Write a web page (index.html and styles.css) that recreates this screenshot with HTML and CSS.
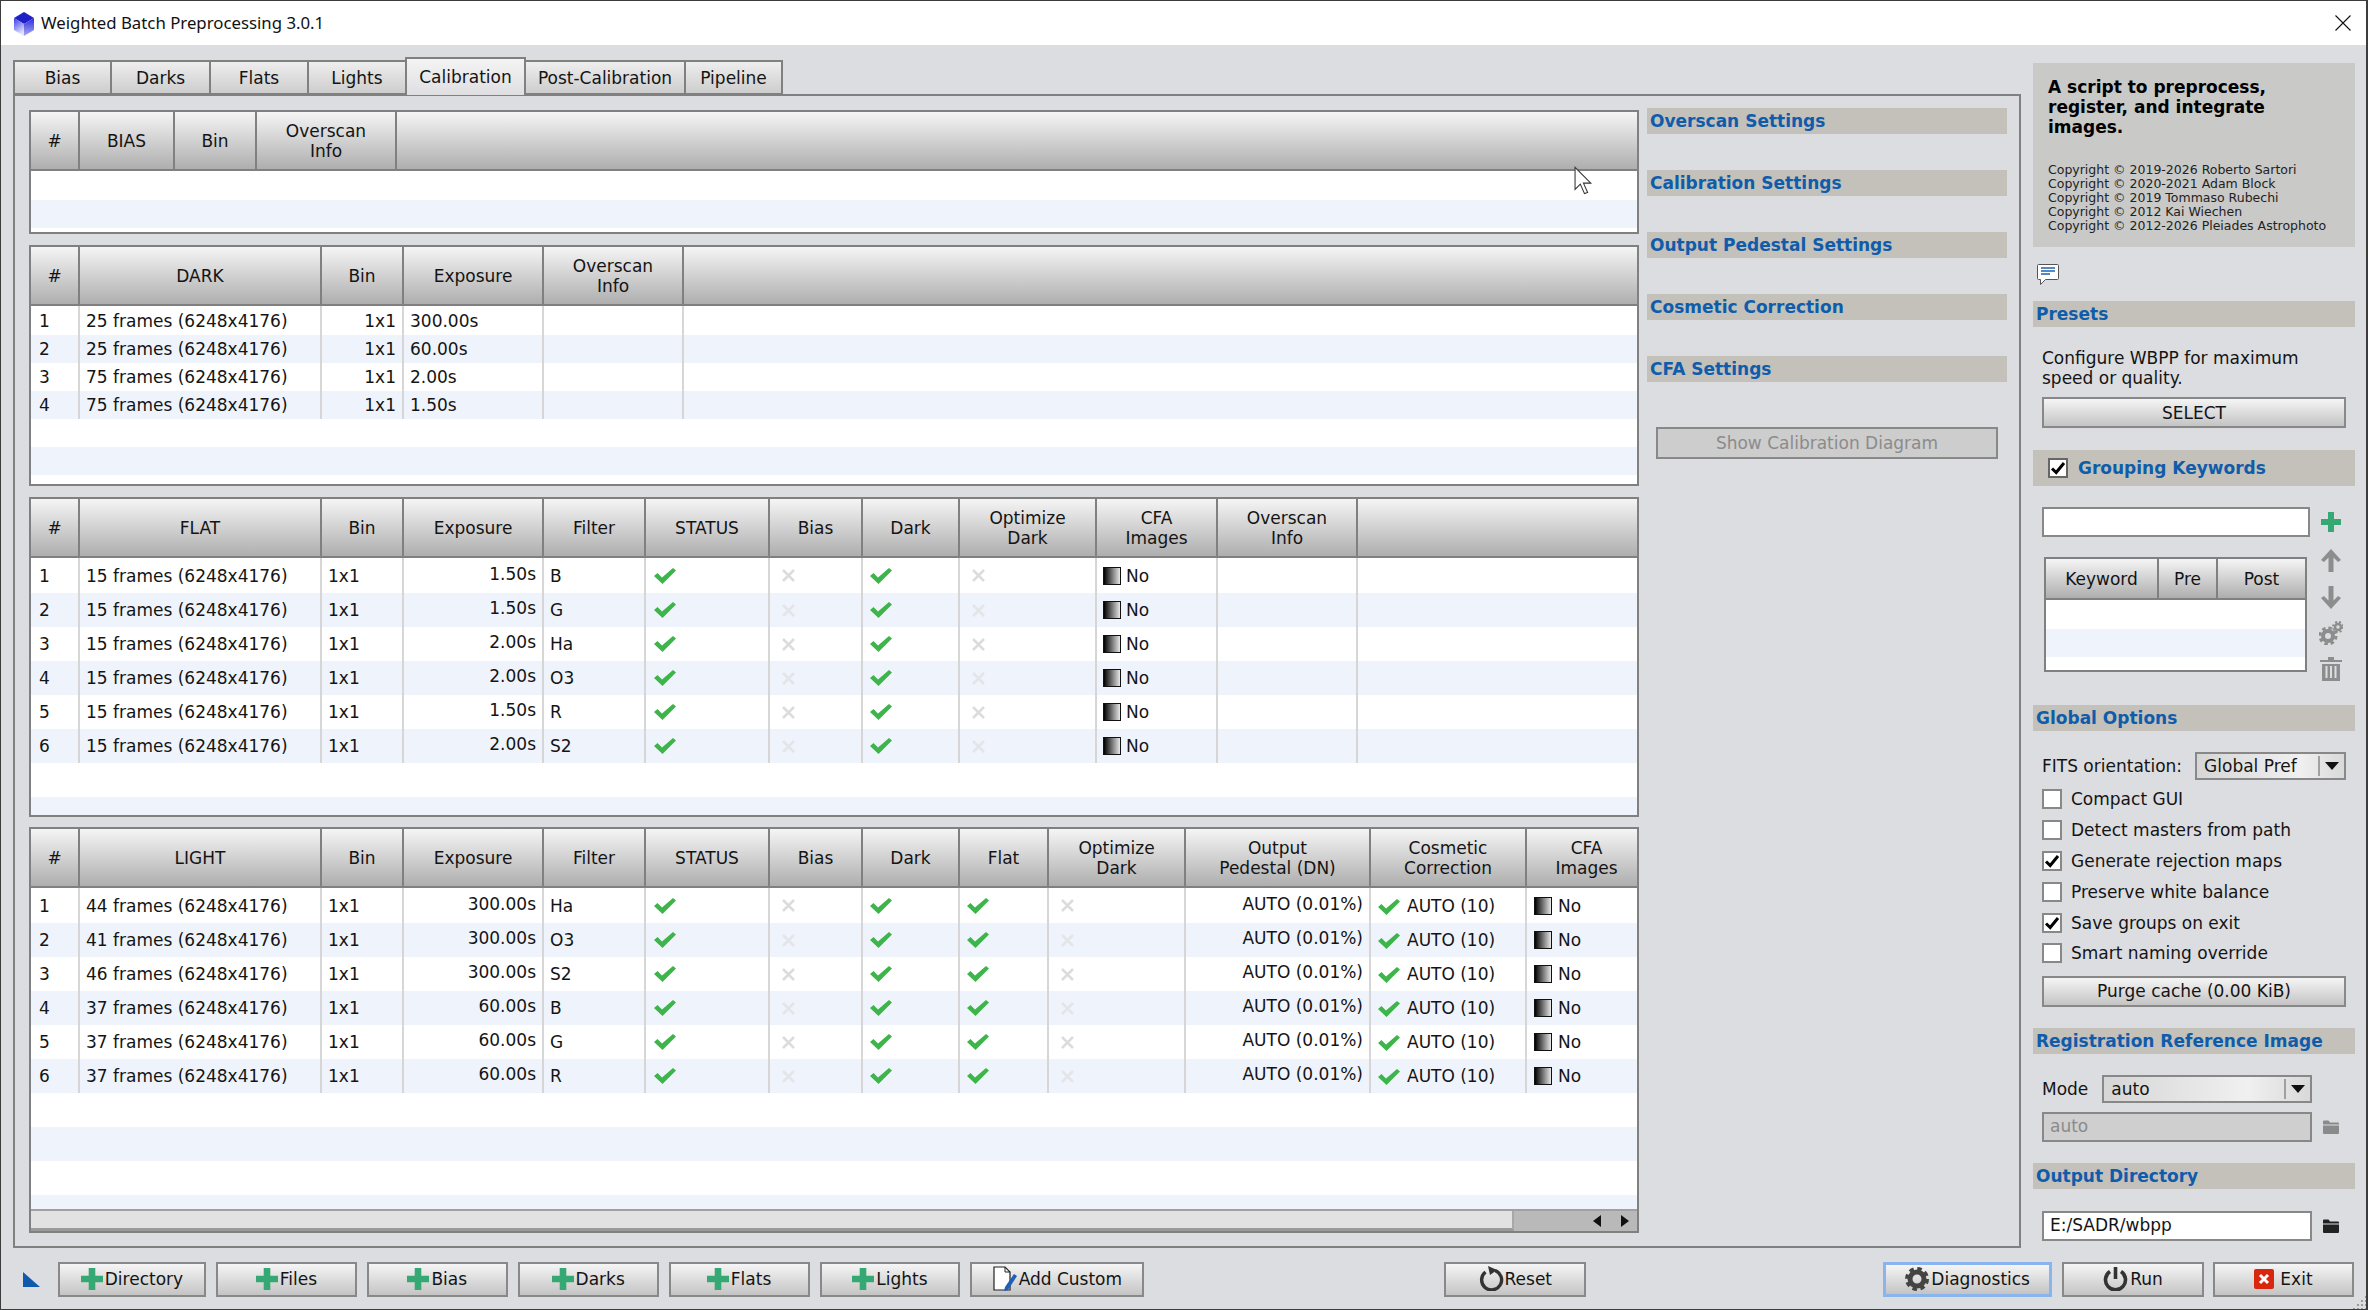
FILE: index.html
```html
<!DOCTYPE html>
<html lang="en">
<head>
    <meta charset="UTF-8">
    <title>Weighted Batch Preprocessing 3.0.1</title>
    <link rel="stylesheet" href="styles.css">
</head>
<body>
    <svg class="defs" xmlns="http://www.w3.org/2000/svg">
        <defs>
            <linearGradient id="gem-left" x1="0" y1="0" x2="0.4" y2="1"><stop offset="0" stop-color="#3a3ae8"/><stop offset="1" stop-color="#e4e4fb"/></linearGradient>
            <linearGradient id="gem-right" x1="0" y1="0" x2="0" y2="1"><stop offset="0" stop-color="#2c2ce0"/><stop offset="1" stop-color="#a9a9f2"/></linearGradient>
            <symbol id="check" viewBox="0 0 22 16"><path d="M0 8 L3.500 5 L8 9.500 L19 0 L22 2.500 L8.500 16 Z" fill="#3db54a"/></symbol>
            <symbol id="cross" viewBox="0 0 13 13"><path d="M1 1 L12 12 M12 1 L1 12" fill="none" stroke="#dcdcdc" stroke-width="2.500"/></symbol>
            <symbol id="plus" viewBox="0 0 20 20"><path d="M7 0h6v7h7v6h-7v7h-6v-7h-7v-6h7z" fill="#35a874"/></symbol>
            <symbol id="up" viewBox="0 0 20 23"><path d="M10 0 L20 11 L17 13 L12.500 8.500 V23 H7.500 V8.500 L3 13 L0 11 Z" fill="#8d8d8d"/></symbol>
            <symbol id="down" viewBox="0 0 20 23"><path d="M10 23 L20 12 L17 10 L12.500 14.500 V0 H7.500 V14.500 L3 10 L0 12 Z" fill="#8d8d8d"/></symbol>
            <symbol id="gear" viewBox="0 0 24 24"><circle cx="12" cy="12" r="7" fill="none" stroke="currentColor" stroke-width="5"/><circle cx="12" cy="12" r="10" fill="none" stroke="currentColor" stroke-width="4" stroke-dasharray="4.400 3.450"/></symbol>
            <symbol id="cogs" viewBox="0 0 24 24"><circle cx="9" cy="15" r="5" fill="none" stroke="#8d8d8d" stroke-width="4"/><circle cx="9" cy="15" r="8" fill="none" stroke="#8d8d8d" stroke-width="3" stroke-dasharray="3.500 2.800"/><circle cx="19" cy="6" r="3" fill="none" stroke="#8d8d8d" stroke-width="2.500"/><circle cx="19" cy="6" r="5" fill="none" stroke="#8d8d8d" stroke-width="2" stroke-dasharray="2 2"/></symbol>
            <symbol id="trash" viewBox="0 0 22 24"><path d="M0 3h8v-3h6v3h8v2h-22z M2 7h18v17h-18z M5.500 9v12h2v-12z M10 9v12h2v-12z M14.500 9v12h2v-12z" fill="#8d8d8d" fill-rule="evenodd"/></symbol>
            <symbol id="folder" viewBox="0 0 16 16"><path d="M0 2.500q0-1 1-1h4.500l1.500 2h8q1 0 1 1v1h-16z M0 6.500h16v7.500q0 1-1 1h-14q-1 0-1-1z" fill="currentColor"/></symbol>
            <symbol id="combo-arrow" viewBox="0 0 14 8"><path d="M0 0h14l-7 8z" fill="#111"/></symbol>
            <symbol id="tick" viewBox="0 0 16 16"><path d="M2 8.500 L6.200 12.500 L14 3" fill="none" stroke="#000" stroke-width="3"/></symbol>
        </defs>
    </svg>

    <div class="window">
        <header class="titlebar">
            <svg class="app-icon" viewBox="0 0 20 24">
                <path d="M10 0 L20 6 L10 12 L0 6 Z" fill="#2020c8"/>
                <path d="M0 6 L10 12 V24 L0 18 Z" fill="url(#gem-left)"/>
                <path d="M20 6 L10 12 V24 L20 18 Z" fill="url(#gem-right)"/>
            </svg>
            <span class="title-text">Weighted Batch Preprocessing 3.0.1</span>
            <svg class="close-icon" viewBox="0 0 16 16"><path d="M0.500 0.500 L15.500 15.500 M15.500 0.500 L0.500 15.500" stroke="#111" stroke-width="1.100" fill="none"/></svg>
        </header>

        <div class="workspace">
            <div class="upper">
                <div class="left">
                    <nav class="tabs">
                        <div class="tab tab-bias">Bias</div>
                        <div class="tab tab-darks">Darks</div>
                        <div class="tab">Flats</div>
                        <div class="tab">Lights</div>
                        <div class="tab tab-active">Calibration</div>
                        <div class="tab tab-post">Post-Calibration</div>
                        <div class="tab tab-last">Pipeline</div>
                    </nav>

                    <div class="panel">
                        <div class="tables">
                            <div class="tbl tbl-bias">
                                <table class="grid">
                                    <thead><tr><th class="w49">#</th><th class="w95">BIAS</th><th class="w82">Bin</th><th class="w140">Overscan<br>Info</th><th class="end"></th></tr></thead>
                                </table>
                                <div class="blank first-short"></div>
                                <div class="blank short alt"></div>
                            </div>

                            <div class="tbl tbl-dark">
                                <table class="grid rows-short">
                                    <thead><tr><th class="w49">#</th><th class="w242">DARK</th><th class="w82">Bin</th><th class="w140">Exposure</th><th class="w140">Overscan<br>Info</th><th class="end"></th></tr></thead>
                                    <tbody>
                                        <tr><td class="idx">1</td><td>25 frames (6248x4176)</td><td class="right">1x1</td><td>300.00s</td><td></td><td class="end"></td></tr>
                                        <tr class="alt"><td class="idx">2</td><td>25 frames (6248x4176)</td><td class="right">1x1</td><td>60.00s</td><td></td><td class="end"></td></tr>
                                        <tr><td class="idx">3</td><td>75 frames (6248x4176)</td><td class="right">1x1</td><td>2.00s</td><td></td><td class="end"></td></tr>
                                        <tr class="alt"><td class="idx">4</td><td>75 frames (6248x4176)</td><td class="right">1x1</td><td>1.50s</td><td></td><td class="end"></td></tr>
                                    </tbody>
                                </table>
                                <div class="blank short"></div>
                                <div class="blank short alt"></div>
                            </div>

                            <div class="tbl tbl-flat">
                                <table class="grid rows-tall">
                                    <thead><tr><th class="w49">#</th><th class="w242">FLAT</th><th class="w82">Bin</th><th class="w140">Exposure</th><th class="w102">Filter</th><th class="w124">STATUS</th><th class="w93">Bias</th><th class="w97">Dark</th><th class="w137">Optimize<br>Dark</th><th class="w121">CFA<br>Images</th><th class="w140">Overscan<br>Info</th><th class="end"></th></tr></thead>
                                    <tbody>
                                        <tr><td class="idx">1</td><td>15 frames (6248x4176)</td><td>1x1</td><td class="num">1.50s</td><td>B</td><td class="ic ic-status"><svg class="check"><use href="#check"/></svg></td><td class="ic-x"><svg class="cross"><use href="#cross"/></svg></td><td class="ic"><svg class="check"><use href="#check"/></svg></td><td class="ic-x"><svg class="cross"><use href="#cross"/></svg></td><td class="cfa-cell"><span class="cfa"></span>No</td><td></td><td class="end"></td></tr>
                                        <tr class="alt"><td class="idx">2</td><td>15 frames (6248x4176)</td><td>1x1</td><td class="num">1.50s</td><td>G</td><td class="ic ic-status"><svg class="check"><use href="#check"/></svg></td><td class="ic-x"><svg class="cross"><use href="#cross"/></svg></td><td class="ic"><svg class="check"><use href="#check"/></svg></td><td class="ic-x"><svg class="cross"><use href="#cross"/></svg></td><td class="cfa-cell"><span class="cfa"></span>No</td><td></td><td class="end"></td></tr>
                                        <tr><td class="idx">3</td><td>15 frames (6248x4176)</td><td>1x1</td><td class="num">2.00s</td><td>Ha</td><td class="ic ic-status"><svg class="check"><use href="#check"/></svg></td><td class="ic-x"><svg class="cross"><use href="#cross"/></svg></td><td class="ic"><svg class="check"><use href="#check"/></svg></td><td class="ic-x"><svg class="cross"><use href="#cross"/></svg></td><td class="cfa-cell"><span class="cfa"></span>No</td><td></td><td class="end"></td></tr>
                                        <tr class="alt"><td class="idx">4</td><td>15 frames (6248x4176)</td><td>1x1</td><td class="num">2.00s</td><td>O3</td><td class="ic ic-status"><svg class="check"><use href="#check"/></svg></td><td class="ic-x"><svg class="cross"><use href="#cross"/></svg></td><td class="ic"><svg class="check"><use href="#check"/></svg></td><td class="ic-x"><svg class="cross"><use href="#cross"/></svg></td><td class="cfa-cell"><span class="cfa"></span>No</td><td></td><td class="end"></td></tr>
                                        <tr><td class="idx">5</td><td>15 frames (6248x4176)</td><td>1x1</td><td class="num">1.50s</td><td>R</td><td class="ic ic-status"><svg class="check"><use href="#check"/></svg></td><td class="ic-x"><svg class="cross"><use href="#cross"/></svg></td><td class="ic"><svg class="check"><use href="#check"/></svg></td><td class="ic-x"><svg class="cross"><use href="#cross"/></svg></td><td class="cfa-cell"><span class="cfa"></span>No</td><td></td><td class="end"></td></tr>
                                        <tr class="alt"><td class="idx">6</td><td>15 frames (6248x4176)</td><td>1x1</td><td class="num">2.00s</td><td>S2</td><td class="ic ic-status"><svg class="check"><use href="#check"/></svg></td><td class="ic-x"><svg class="cross"><use href="#cross"/></svg></td><td class="ic"><svg class="check"><use href="#check"/></svg></td><td class="ic-x"><svg class="cross"><use href="#cross"/></svg></td><td class="cfa-cell"><span class="cfa"></span>No</td><td></td><td class="end"></td></tr>
                                    </tbody>
                                </table>
                                <div class="blank tall"></div>
                                <div class="blank tall alt"></div>
                            </div>

                            <div class="tbl tbl-light">
                                <table class="grid rows-tall">
                                    <thead><tr><th class="w49">#</th><th class="w242">LIGHT</th><th class="w82">Bin</th><th class="w140">Exposure</th><th class="w102">Filter</th><th class="w124">STATUS</th><th class="w93">Bias</th><th class="w97">Dark</th><th class="w89">Flat</th><th class="w137">Optimize<br>Dark</th><th class="w185">Output<br>Pedestal (DN)</th><th class="w156">Cosmetic<br>Correction</th><th class="end th-clipped">CFA<br>Images</th></tr></thead>
                                    <tbody>
                                        <tr><td class="idx">1</td><td>44 frames (6248x4176)</td><td>1x1</td><td class="num">300.00s</td><td>Ha</td><td class="ic ic-status"><svg class="check"><use href="#check"/></svg></td><td class="ic-x"><svg class="cross"><use href="#cross"/></svg></td><td class="ic"><svg class="check"><use href="#check"/></svg></td><td class="ic"><svg class="check"><use href="#check"/></svg></td><td class="ic-x"><svg class="cross"><use href="#cross"/></svg></td><td class="num">AUTO (0.01%)</td><td class="cosmetic"><svg class="check"><use href="#check"/></svg>AUTO (10)</td><td class="cfa-last end"><span class="cfa"></span>No</td></tr>
                                        <tr class="alt"><td class="idx">2</td><td>41 frames (6248x4176)</td><td>1x1</td><td class="num">300.00s</td><td>O3</td><td class="ic ic-status"><svg class="check"><use href="#check"/></svg></td><td class="ic-x"><svg class="cross"><use href="#cross"/></svg></td><td class="ic"><svg class="check"><use href="#check"/></svg></td><td class="ic"><svg class="check"><use href="#check"/></svg></td><td class="ic-x"><svg class="cross"><use href="#cross"/></svg></td><td class="num">AUTO (0.01%)</td><td class="cosmetic"><svg class="check"><use href="#check"/></svg>AUTO (10)</td><td class="cfa-last end"><span class="cfa"></span>No</td></tr>
                                        <tr><td class="idx">3</td><td>46 frames (6248x4176)</td><td>1x1</td><td class="num">300.00s</td><td>S2</td><td class="ic ic-status"><svg class="check"><use href="#check"/></svg></td><td class="ic-x"><svg class="cross"><use href="#cross"/></svg></td><td class="ic"><svg class="check"><use href="#check"/></svg></td><td class="ic"><svg class="check"><use href="#check"/></svg></td><td class="ic-x"><svg class="cross"><use href="#cross"/></svg></td><td class="num">AUTO (0.01%)</td><td class="cosmetic"><svg class="check"><use href="#check"/></svg>AUTO (10)</td><td class="cfa-last end"><span class="cfa"></span>No</td></tr>
                                        <tr class="alt"><td class="idx">4</td><td>37 frames (6248x4176)</td><td>1x1</td><td class="num">60.00s</td><td>B</td><td class="ic ic-status"><svg class="check"><use href="#check"/></svg></td><td class="ic-x"><svg class="cross"><use href="#cross"/></svg></td><td class="ic"><svg class="check"><use href="#check"/></svg></td><td class="ic"><svg class="check"><use href="#check"/></svg></td><td class="ic-x"><svg class="cross"><use href="#cross"/></svg></td><td class="num">AUTO (0.01%)</td><td class="cosmetic"><svg class="check"><use href="#check"/></svg>AUTO (10)</td><td class="cfa-last end"><span class="cfa"></span>No</td></tr>
                                        <tr><td class="idx">5</td><td>37 frames (6248x4176)</td><td>1x1</td><td class="num">60.00s</td><td>G</td><td class="ic ic-status"><svg class="check"><use href="#check"/></svg></td><td class="ic-x"><svg class="cross"><use href="#cross"/></svg></td><td class="ic"><svg class="check"><use href="#check"/></svg></td><td class="ic"><svg class="check"><use href="#check"/></svg></td><td class="ic-x"><svg class="cross"><use href="#cross"/></svg></td><td class="num">AUTO (0.01%)</td><td class="cosmetic"><svg class="check"><use href="#check"/></svg>AUTO (10)</td><td class="cfa-last end"><span class="cfa"></span>No</td></tr>
                                        <tr class="alt"><td class="idx">6</td><td>37 frames (6248x4176)</td><td>1x1</td><td class="num">60.00s</td><td>R</td><td class="ic ic-status"><svg class="check"><use href="#check"/></svg></td><td class="ic-x"><svg class="cross"><use href="#cross"/></svg></td><td class="ic"><svg class="check"><use href="#check"/></svg></td><td class="ic"><svg class="check"><use href="#check"/></svg></td><td class="ic-x"><svg class="cross"><use href="#cross"/></svg></td><td class="num">AUTO (0.01%)</td><td class="cosmetic"><svg class="check"><use href="#check"/></svg>AUTO (10)</td><td class="cfa-last end"><span class="cfa"></span>No</td></tr>
                                    </tbody>
                                </table>
                                <div class="blank tall"></div>
                                <div class="blank tall alt"></div>
                                <div class="blank tall"></div>
                                <div class="blank stub alt"></div>
                                <div class="hscroll">
                                    <div class="hscroll-thumb"></div>
                                    <div class="hscroll-arrows">
                                        <svg class="arrow" viewBox="0 0 8 12"><path d="M8 0v12l-8-6z" fill="#111"/></svg>
                                        <svg class="arrow" viewBox="0 0 8 12"><path d="M0 0v12l8-6z" fill="#111"/></svg>
                                    </div>
                                </div>
                            </div>
                        </div>

                        <div class="settings">
                            <div class="bar">Overscan Settings</div>
                            <div class="bar">Calibration Settings</div>
                            <div class="bar">Output Pedestal Settings</div>
                            <div class="bar">Cosmetic Correction</div>
                            <div class="bar">CFA Settings</div>
                            <div class="btn btn-disabled">Show Calibration Diagram</div>
                        </div>
                    </div>
                </div>

                <aside class="side">
                    <div class="info">
                        <p class="info-lead">A script to preprocess,<br>register, and integrate<br>images.</p>
                        <p class="info-copy">Copyright © 2019-2026 Roberto Sartori<br>Copyright © 2020-2021 Adam Block<br>Copyright © 2019 Tommaso Rubechi<br>Copyright © 2012 Kai Wiechen<br>Copyright © 2012-2026 Pleiades Astrophoto</p>
                    </div>
                    <svg class="comment-icon" viewBox="0 0 22 21">
                        <path d="M1.500 0.500h19q1 0 1 1v13q0 1-1 1h-12l-5 5v-5h-2q-1 0-1-1v-13q0-1 1-1z" fill="#fff" stroke="#555"/>
                        <path d="M4 4h14M4 7h14M4 10h9" stroke="#1f62b0" stroke-width="1.300"/>
                    </svg>

                    <div class="bar s-presets">Presets</div>
                    <p class="presets-text">Configure WBPP for maximum<br>speed or quality.</p>
                    <div class="btn btn-select">SELECT</div>

                    <div class="bar bar-check"><span class="box box-dark"><svg class="tick"><use href="#tick"/></svg></span>Grouping Keywords</div>
                    <div class="kw">
                        <div class="kw-main">
                            <div class="input"></div>
                            <div class="tbl tbl-kw">
                                <table class="grid">
                                    <thead><tr><th class="w113">Keyword</th><th class="w59">Pre</th><th class="end">Post</th></tr></thead>
                                </table>
                                <div class="blank first-short"></div>
                                <div class="blank short alt"></div>
                            </div>
                        </div>
                        <div class="kw-tools">
                            <svg class="tool tool-plus"><use href="#plus"/></svg>
                            <svg class="tool tool-up"><use href="#up"/></svg>
                            <svg class="tool tool-down"><use href="#down"/></svg>
                            <svg class="tool tool-gear"><use href="#cogs"/></svg>
                            <svg class="tool tool-trash"><use href="#trash"/></svg>
                        </div>
                    </div>

                    <div class="bar s-global">Global Options</div>
                    <div class="field-row fits-row">
                        <span>FITS orientation:</span>
                        <div class="combo combo-fits"><span class="combo-text">Global Pref</span><span class="combo-btn"><svg class="combo-arrow"><use href="#combo-arrow"/></svg></span></div>
                    </div>
                    <div class="checks">
                        <label class="check-row"><span class="box"></span>Compact GUI</label>
                        <label class="check-row"><span class="box"></span>Detect masters from path</label>
                        <label class="check-row"><span class="box"><svg class="tick"><use href="#tick"/></svg></span>Generate rejection maps</label>
                        <label class="check-row"><span class="box"></span>Preserve white balance</label>
                        <label class="check-row"><span class="box"><svg class="tick"><use href="#tick"/></svg></span>Save groups on exit</label>
                        <label class="check-row"><span class="box"></span>Smart naming override</label>
                    </div>
                    <div class="btn btn-purge">Purge cache (0.00 KiB)</div>

                    <div class="bar s-reg">Registration Reference Image</div>
                    <div class="field-row mode-row">
                        <span>Mode</span>
                        <div class="combo combo-mode"><span class="combo-text">auto</span><span class="combo-btn"><svg class="combo-arrow"><use href="#combo-arrow"/></svg></span></div>
                    </div>
                    <div class="field-row path-row">
                        <div class="input input-path input-disabled">auto</div>
                        <svg class="folder folder-off"><use href="#folder"/></svg>
                    </div>

                    <div class="bar s-reg">Output Directory</div>
                    <div class="field-row output-row">
                        <div class="input input-path">E:/SADR/wbpp</div>
                        <svg class="folder"><use href="#folder"/></svg>
                    </div>
                </aside>
            </div>

            <footer class="bottom">
                <svg class="corner" viewBox="0 0 17 15"><path d="M0 0 L17 15 H0 Z" fill="#0f5aae"/></svg>
                <div class="btn btn-foot w148"><svg class="foot-plus"><use href="#plus"/></svg>Directory</div>
                <div class="btn btn-foot w141"><svg class="foot-plus"><use href="#plus"/></svg>Files</div>
                <div class="btn btn-foot w141"><svg class="foot-plus"><use href="#plus"/></svg>Bias</div>
                <div class="btn btn-foot w141"><svg class="foot-plus"><use href="#plus"/></svg>Darks</div>
                <div class="btn btn-foot w141"><svg class="foot-plus"><use href="#plus"/></svg>Flats</div>
                <div class="btn btn-foot w141"><svg class="foot-plus"><use href="#plus"/></svg>Lights</div>
                <div class="btn btn-foot w174">
                    <svg class="foot-doc" viewBox="0 0 27 25">
                        <path d="M1 1h11l5 5v18h-16z" fill="#fff" stroke="#222" stroke-width="1.200"/>
                        <path d="M12 1v5h5" fill="none" stroke="#222"/>
                        <path d="M21 8 L24 10 L15 24 L11 25 L12 21 Z" fill="#1f5fb4"/>
                    </svg>Add Custom
                </div>
                <div class="btn btn-foot btn-reset">
                    <svg class="foot-reset" viewBox="0 0 26 25">
                        <path d="M16 4.500 A10 10 0 1 1 6.500 6" fill="none" stroke="#333" stroke-width="3.400"/>
                        <path d="M9 0 L18 4 L11 9 Z" fill="#333"/>
                    </svg>Reset
                </div>
                <div class="btn btn-foot btn-diag"><svg class="foot-gear"><use href="#gear"/></svg>Diagnostics</div>
                <div class="btn btn-foot btn-run">
                    <svg class="foot-power" viewBox="0 0 25 24">
                        <path d="M7 4.500 A10 10 0 1 0 18 4.500" fill="none" stroke="#333" stroke-width="3.600"/>
                        <path d="M12.500 0v12" stroke="#333" stroke-width="3.600"/>
                    </svg>Run
                </div>
                <div class="btn btn-foot btn-exit">
                    <svg class="foot-exit" viewBox="0 0 20 20">
                        <rect width="20" height="20" rx="2" fill="#d8260f"/>
                        <path d="M6 6 L14 14 M14 6 L6 14" stroke="#fff" stroke-width="3"/>
                    </svg>Exit
                </div>
            </footer>
        </div>

        <svg class="cursor" viewBox="0 0 20 28"><path d="M1 1 V22 L6 17 L10 26 L13 25 L9 16 L16 16 Z" fill="#fff" stroke="#333"/></svg>
        <div class="grip"></div>
    </div>
</body>
</html>
```

FILE: styles.css
```css
* {
    box-sizing: border-box;
}
html, body {
    margin: 0;
    padding: 0;
}
body {
    font-family: "DejaVu Sans", sans-serif;
    font-size: 17px;
    line-height: 20px;
    color: #141414;
    background-color: #dcdde0;
}
p {
    margin: 0;
}
.defs {
    display: block;
    width: 0;
    height: 0;
}
.window {
    position: relative;
    width: 2368px;
    height: 1310px;
    display: flex;
    flex-direction: column;
    border: 1px solid #3c3c3c;
    border-right-width: 2px;
    overflow: hidden;
}

/* title bar */
.titlebar {
    height: 44px;
    flex: none;
    display: flex;
    align-items: center;
    background-color: #ffffff;
    padding-left: 13px;
    padding-right: 15px;
}
.app-icon {
    width: 20px;
    height: 24px;
    margin-top: 1px;
}
.title-text {
    font-family: "Noto Sans", sans-serif;
    font-size: 16.800px;
    margin-left: 7px;
    color: #111;
}
.close-icon {
    width: 16px;
    height: 16px;
    margin-left: auto;
}

/* main area */
.workspace {
    flex: 1;
    display: flex;
    flex-direction: column;
    padding: 12px;
}
.upper {
    height: 1191px;
    flex: none;
    display: flex;
}
.left {
    width: 2008px;
    flex: none;
    display: flex;
    flex-direction: column;
}
.tabs {
    height: 38px;
    flex: none;
    display: flex;
    align-items: flex-end;
}
.tab {
    width: 100px;
    height: 35px;
    margin-right: -2px;
    display: flex;
    align-items: center;
    justify-content: center;
    border: 2px solid #808080;
    background: linear-gradient(#eeeeee, #cdcdcd);
}
.tab-bias {
    width: 99px;
}
.tab-darks {
    width: 101px;
}
.tab-post {
    width: 162px;
}
.tab-last {
    width: 99px;
}
.tab-active {
    width: 121px;
    height: 38px;
    border-bottom: none;
    background: linear-gradient(#f4f4f4, #dfdfe2);
    position: relative;
    z-index: 1;
}
.panel {
    flex: 1;
    margin-top: -1px;
    display: flex;
    gap: 8px;
    padding: 12px 12px 0 14px;
    border: 2px solid #808080;
}
.tables {
    width: 1610px;
    flex: none;
    padding-top: 2px;
}
.settings {
    width: 360px;
    flex: none;
    display: flex;
    flex-direction: column;
}
.settings .bar {
    margin-bottom: 36px;
}

/* tables */
.tbl {
    border: 2px solid #808080;
    background-color: #ffffff;
    overflow: hidden;
}
.tbl-bias {
    height: 124px;
    margin-bottom: 11px;
}
.tbl-dark {
    height: 241px;
    margin-bottom: 11px;
}
.tbl-flat {
    height: 320px;
    margin-bottom: 10px;
}
.tbl-light {
    height: 406px;
}
.grid {
    width: 100%;
    table-layout: fixed;
    border-collapse: separate;
    border-spacing: 0;
}
.grid th {
    height: 59px;
    padding: 0;
    font-weight: normal;
    text-align: center;
    border-right: 2px solid #808080;
    border-bottom: 2px solid #808080;
    background: linear-gradient(#f5f5f5, #aeaeae);
}
.grid th.end {
    border-right: none;
}
.grid th.th-clipped {
    padding-left: 9px;
}
.grid td {
    padding: 0 6px;
    white-space: nowrap;
    overflow: hidden;
    border-right: 2px solid #d6d6d6;
}
.grid td.end {
    border-right: none;
}
.rows-short td {
    height: 28px;
}
.rows-tall td {
    height: 34px;
}
.rows-short tbody tr:first-child td {
    height: 29px;
}
.rows-tall tbody tr:first-child td {
    height: 35px;
}
.alt td, .blank.alt {
    background-color: #eff4fc;
}
.w49 { width: 49px; }
.w59 { width: 59px; }
.w82 { width: 82px; }
.w89 { width: 89px; }
.w93 { width: 93px; }
.w95 { width: 95px; }
.w97 { width: 97px; }
.w102 { width: 102px; }
.w113 { width: 113px; }
.w121 { width: 121px; }
.w124 { width: 124px; }
.w137 { width: 137px; }
.w140 { width: 140px; }
.w156 { width: 156px; }
.w185 { width: 185px; }
.w242 { width: 242px; }
.grid td.idx {
    padding-left: 8px;
}
.grid td.right {
    text-align: right;
}
.grid td.num {
    text-align: right;
    padding-bottom: 4px;
}
.grid td.ic {
    padding-left: 7px;
    line-height: 0;
}
.grid td.ic-status {
    padding-left: 8px;
}
.grid td.ic-x {
    padding-left: 12px;
    line-height: 0;
}
.grid td.cfa-cell {
    padding-left: 6px;
}
.grid td.cfa-last {
    padding-left: 7px;
}
.check {
    width: 22px;
    height: 16px;
}
.cross {
    width: 13px;
    height: 13px;
}
.alt .cross {
    opacity: 0.6;
}
.cfa {
    display: inline-block;
    width: 18px;
    height: 18px;
    margin-right: 5px;
    vertical-align: -3px;
    border: 1px solid #111;
    background: linear-gradient(90deg, #000000, #e8e8e8);
}
.cfa-last .cfa {
    margin-right: 6px;
}
.grid td.cosmetic {
    padding-left: 7px;
}
.cosmetic .check {
    margin-right: 7px;
    vertical-align: -3px;
}
.blank.first-short {
    height: 29px;
}
.blank.short {
    height: 28px;
}
.blank.tall {
    height: 34px;
}
.blank.stub {
    height: 14px;
}
.hscroll {
    height: 22px;
    display: flex;
    border-top: 2px solid #a0a0a0;
    background-color: #b9b9b9;
}
.hscroll-thumb {
    width: 1483px;
    background-color: #e2e2e2;
    border-right: 2px solid #a8a8a8;
    border-bottom: 3px solid #9a9a9a;
}
.hscroll-arrows {
    flex: 1;
    display: flex;
    justify-content: flex-end;
    align-items: center;
    gap: 20px;
    padding-right: 8px;
}
.arrow {
    width: 8px;
    height: 12px;
}

/* section bars, buttons, inputs */
.bar {
    height: 26px;
    flex: none;
    padding-left: 3px;
    font-weight: bold;
    line-height: 26px;
    color: #0f5cab;
    background-color: #c4c1ba;
}
.btn {
    display: flex;
    align-items: center;
    justify-content: center;
    border: 2px solid #888888;
    background: linear-gradient(#f5f5f5, #c4c4c4);
}
.btn-disabled {
    height: 32px;
    margin: 9px 9px 0;
    color: #8b8b8b;
    background: #cdcdcd;
}
.input {
    height: 30px;
    border: 2px solid #888888;
    background-color: #ffffff;
    padding-left: 6px;
    line-height: 25px;
}
.input-disabled {
    color: #8b8b8b;
    background-color: #cfcfcf;
}

/* side column */
.side {
    width: 322px;
    flex: none;
    margin-left: 12px;
    margin-top: 6px;
}
.info {
    height: 184px;
    padding: 14px 15px 0;
    background-color: #c9c9c7;
    color: #000;
}
.info-lead {
    font-weight: bold;
}
.info-copy {
    margin-top: 26px;
    font-size: 12.500px;
    line-height: 14px;
    color: #222;
}
.comment-icon {
    display: block;
    width: 22px;
    height: 21px;
    margin: 17px 0 16px 4px;
}
.presets-text {
    margin: 21px 0 0 9px;
}
.btn-select {
    height: 31px;
    margin: 9px 9px 22px;
}
.bar-check {
    height: 36px;
    padding-left: 15px;
    line-height: 34px;
    display: flex;
    align-items: center;
}
.box {
    width: 20px;
    height: 20px;
    flex: none;
    display: flex;
    align-items: center;
    justify-content: center;
    border: 2px solid #888888;
    background-color: #ffffff;
}
.box-dark {
    margin-right: 10px;
    border-color: #666666;
}
.tick {
    width: 16px;
    height: 16px;
}
.kw {
    display: flex;
    gap: 11px;
    margin: 21px 0 0 9px;
}
.kw-main {
    width: 268px;
    flex: none;
}
.tbl-kw {
    width: 263px;
    height: 115px;
    margin: 20px 0 0 2px;
}
.kw-tools {
    width: 20px;
    flex: none;
    display: flex;
    flex-direction: column;
    align-items: center;
}
.tool {
    display: block;
    flex: none;
}
.tool-plus {
    width: 20px;
    height: 20px;
    margin-top: 5px;
}
.tool-up {
    width: 20px;
    height: 23px;
    margin-top: 17px;
}
.tool-down {
    width: 20px;
    height: 23px;
    margin-top: 14px;
}
.tool-gear {
    width: 24px;
    height: 24px;
    margin-top: 12px;
}
.tool-trash {
    width: 22px;
    height: 24px;
    margin-top: 12px;
}
.tbl-kw .grid th {
    height: 41px;
}
.s-global {
    margin-top: 24px;
}
.s-reg {
    margin-top: 21px;
}
.field-row {
    display: flex;
    align-items: center;
    padding-left: 9px;
}
.fits-row {
    height: 28px;
    margin-top: 21px;
}
.combo {
    height: 28px;
    display: flex;
    align-items: center;
    border: 2px solid #888888;
    background: linear-gradient(90deg, #d6d6d6, #f0f0f0 70%, #d9d9d9);
}
.combo-fits {
    width: 151px;
    margin-left: 13px;
}
.combo-mode {
    width: 210px;
    margin-left: 14px;
}
.combo-text {
    flex: 1;
    padding-left: 7px;
}
.combo-btn {
    width: 26px;
    height: 20px;
    display: flex;
    align-items: center;
    justify-content: center;
    border-left: 2px solid #a0a0a0;
}
.combo-arrow {
    width: 14px;
    height: 8px;
}
.checks {
    margin: 4px 0 0 9px;
}
.check-row {
    height: 30.800px;
    display: flex;
    align-items: center;
    gap: 9px;
}
.btn-purge {
    height: 31px;
    margin: 7px 9px 0;
}
.mode-row {
    height: 28px;
    margin-top: 21px;
}
.path-row {
    margin-top: 9px;
}
.output-row {
    margin-top: 22px;
}
.input-path {
    width: 270px;
}
.folder {
    width: 16px;
    height: 16px;
    margin-left: 11px;
    color: #222222;
}
.folder-off {
    color: #8a8a8a;
}

/* bottom buttons */
.bottom {
    height: 35px;
    flex: none;
    margin-top: 14px;
    display: flex;
    align-items: stretch;
    gap: 10px;
}
.corner {
    width: 17px;
    height: 15px;
    align-self: flex-end;
    margin: 0 8px 10px 10px;
}
.btn-foot {
    gap: 2px;
    padding-bottom: 2px;
}
.w141 { width: 141px; }
.w148 { width: 148px; }
.w174 { width: 174px; }
.foot-plus {
    width: 22px;
    height: 22px;
}
.foot-doc {
    width: 27px;
    height: 25px;
    margin-right: -3px;
}
.foot-reset {
    width: 26px;
    height: 25px;
    margin-right: -2px;
}
.foot-gear {
    width: 24px;
    height: 24px;
    color: #444444;
}
.foot-power {
    width: 25px;
    height: 24px;
}
.foot-exit {
    width: 20px;
    height: 20px;
    margin-right: 4px;
}
.btn-reset {
    width: 142px;
    margin-left: 290px;
}
.btn-diag {
    width: 169px;
    margin-left: 287px;
    border: 3px solid #8ab4ee;
}
.btn-run {
    width: 142px;
}
.btn-exit {
    width: 141px;
    margin-left: -1px;
}

/* things lying over the window */
.cursor {
    position: absolute;
    left: 1573px;
    top: 165px;
    width: 21px;
    height: 30px;
}
.grip {
    position: absolute;
    right: 0;
    bottom: 0;
    width: 14px;
    height: 14px;
    background: radial-gradient(circle, #9a9a9a 1px, transparent 1.500px) 0 0 / 4px 4px;
    clip-path: polygon(100% 0, 100% 100%, 0 100%);
}
```
